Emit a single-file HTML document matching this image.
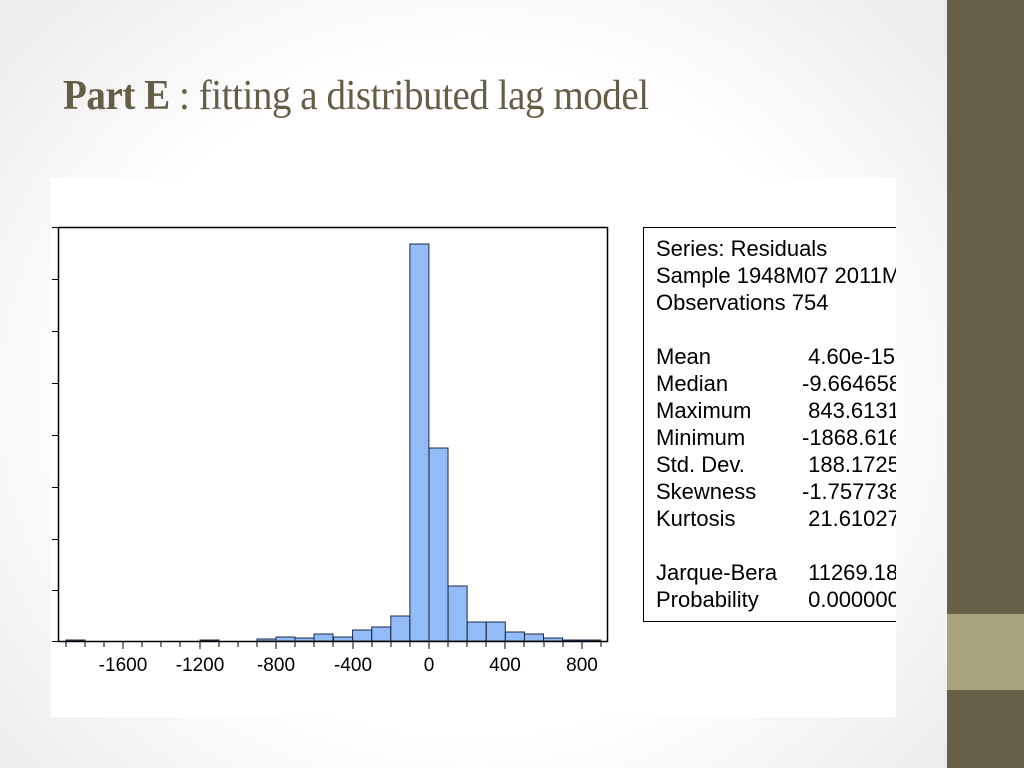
<!DOCTYPE html>
<html><head><meta charset="utf-8"><style>
html,body{margin:0;padding:0}
body{width:1024px;height:768px;position:relative;overflow:hidden;background:radial-gradient(ellipse 620px 560px at 470px 400px,#ffffff 60%,#ececec 100%);font-family:"Liberation Sans",sans-serif}
.side{position:absolute;left:947px;top:0;width:77px;height:768px;background:#675f48}
.band{position:absolute;left:947px;top:614px;width:77px;height:76px;background:#a9a47c}
.title{position:absolute;left:63px;top:72px;font-family:"Liberation Serif",serif;font-size:42px;color:#655e47;white-space:nowrap;transform:scaleX(0.93);transform-origin:left top;letter-spacing:-0.5px}
.title b{font-weight:bold}
.img{position:absolute;left:51px;top:178px;width:845px;height:539px;background:#fff;overflow:hidden}
.stats{position:absolute;left:592px;top:49px;width:300px;height:393px;border:1px solid #000;border-right:none;font-size:22px;color:#000}
.stats div{position:absolute;left:12px;white-space:nowrap;line-height:27px}
.stats span{position:absolute;left:146px}
</style></head><body>
<div class="side"></div><div class="band"></div>
<div class="title"><b>Part E</b> : fitting a distributed lag model</div>
<div class="img">
<svg width="845" height="539" viewBox="51 178 845 539" style="position:absolute;left:0;top:0">
<g fill="#92bbf7" stroke="#1a2a44" stroke-width="1">
<rect x="66" y="640" width="19" height="1"/>
<rect x="200" y="640" width="19" height="1"/>
<rect x="257" y="639" width="19" height="2"/>
<rect x="276" y="637" width="19" height="4"/>
<rect x="295" y="638" width="19" height="3"/>
<rect x="314" y="634" width="19" height="7"/>
<rect x="333.5" y="637" width="19" height="4"/>
<rect x="352.6" y="630" width="19" height="11"/>
<rect x="371.7" y="627" width="19" height="14"/>
<rect x="390.8" y="616" width="19" height="25"/>
<rect x="409.9" y="244" width="19" height="397"/>
<rect x="429" y="448" width="19" height="193"/>
<rect x="448.1" y="586" width="19" height="55"/>
<rect x="467.2" y="622" width="19" height="19"/>
<rect x="486.3" y="622" width="19" height="19"/>
<rect x="505.4" y="632" width="19" height="9"/>
<rect x="524.5" y="634" width="19" height="7"/>
<rect x="543.6" y="638" width="19" height="3"/>
<rect x="562.7" y="640" width="19" height="1"/>
<rect x="581.8" y="640" width="19" height="1"/>
</g>
<rect x="58.5" y="227.5" width="549" height="414" fill="none" stroke="#000" stroke-width="1.5"/>
<g stroke="#000" stroke-width="1">
<line x1="52" y1="227.5" x2="58" y2="227.5"/><line x1="52" y1="279.5" x2="58" y2="279.5"/><line x1="52" y1="331.5" x2="58" y2="331.5"/><line x1="52" y1="383.5" x2="58" y2="383.5"/><line x1="52" y1="435.5" x2="58" y2="435.5"/><line x1="52" y1="487.5" x2="58" y2="487.5"/><line x1="52" y1="539.5" x2="58" y2="539.5"/><line x1="52" y1="590.5" x2="58" y2="590.5"/><line x1="52" y1="641.5" x2="58" y2="641.5"/>
<line x1="66" y1="641" x2="66" y2="647"/><line x1="85" y1="641" x2="85" y2="647"/><line x1="104" y1="641" x2="104" y2="647"/><line x1="123" y1="641" x2="123" y2="649"/><line x1="142" y1="641" x2="142" y2="647"/><line x1="161" y1="641" x2="161" y2="647"/><line x1="180" y1="641" x2="180" y2="647"/><line x1="200" y1="641" x2="200" y2="649"/><line x1="219" y1="641" x2="219" y2="647"/><line x1="238" y1="641" x2="238" y2="647"/><line x1="257" y1="641" x2="257" y2="647"/><line x1="276" y1="641" x2="276" y2="649"/><line x1="295" y1="641" x2="295" y2="647"/><line x1="314" y1="641" x2="314" y2="647"/><line x1="333" y1="641" x2="333" y2="647"/><line x1="353" y1="641" x2="353" y2="649"/><line x1="372" y1="641" x2="372" y2="647"/><line x1="391" y1="641" x2="391" y2="647"/><line x1="410" y1="641" x2="410" y2="647"/><line x1="429" y1="641" x2="429" y2="649"/><line x1="448" y1="641" x2="448" y2="647"/><line x1="467" y1="641" x2="467" y2="647"/><line x1="486" y1="641" x2="486" y2="647"/><line x1="505" y1="641" x2="505" y2="649"/><line x1="524" y1="641" x2="524" y2="647"/><line x1="544" y1="641" x2="544" y2="647"/><line x1="563" y1="641" x2="563" y2="647"/><line x1="582" y1="641" x2="582" y2="649"/><line x1="601" y1="641" x2="601" y2="647"/>
</g>
<g font-family="Liberation Sans, sans-serif" font-size="19" text-anchor="middle" fill="#000">
<text x="123" y="671">-1600</text><text x="200" y="671">-1200</text><text x="276" y="671">-800</text><text x="353" y="671">-400</text><text x="429" y="671">0</text><text x="505" y="671">400</text><text x="582" y="671">800</text>
</g>
</svg>
<div class="stats">
<div style="top:7px">Series: Residuals</div>
<div style="top:34px">Sample 1948M07 2011M12</div>
<div style="top:61px">Observations 754</div>
<div style="top:115px">Mean<span>&nbsp;4.60e-15</span></div>
<div style="top:142px">Median<span>-9.664658</span></div>
<div style="top:169px">Maximum<span>&nbsp;843.6131</span></div>
<div style="top:196px">Minimum<span>-1868.616</span></div>
<div style="top:223px">Std. Dev.<span>&nbsp;188.1725</span></div>
<div style="top:250px">Skewness<span>-1.757738</span></div>
<div style="top:277px">Kurtosis<span>&nbsp;21.61027</span></div>
<div style="top:331px">Jarque-Bera<span>&nbsp;11269.18</span></div>
<div style="top:358px">Probability<span>&nbsp;0.000000</span></div>
</div>
</div>
</body></html>
